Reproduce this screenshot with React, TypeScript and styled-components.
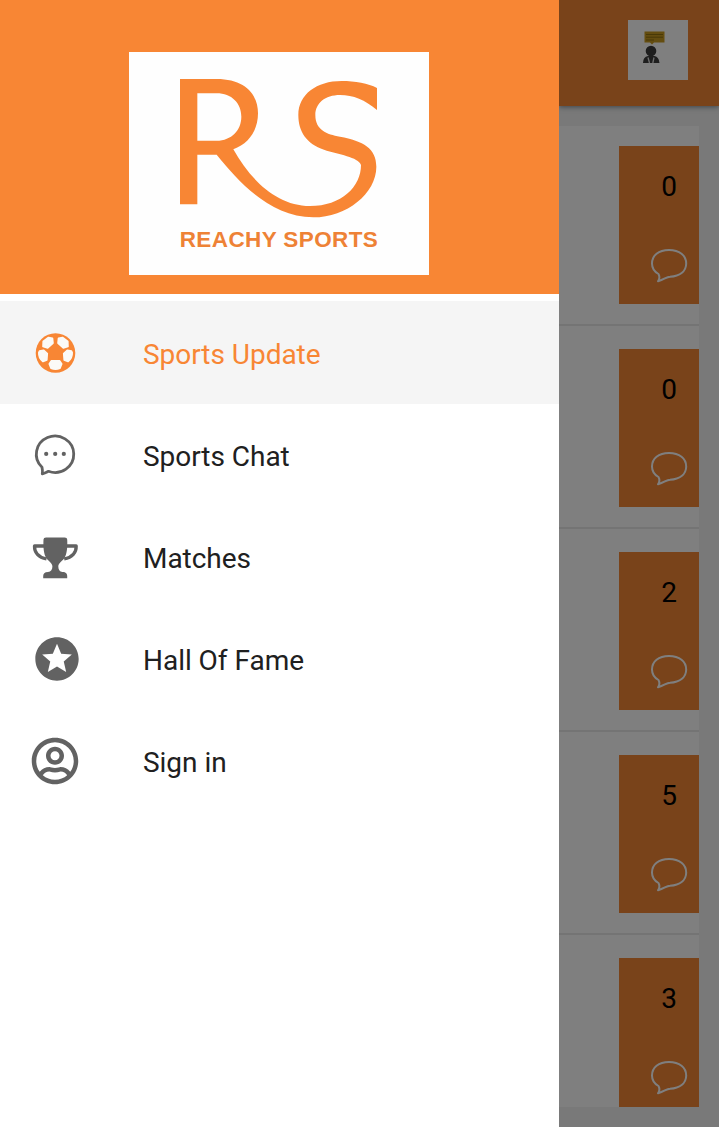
import React from "react";
import styled, { createGlobalStyle } from "styled-components";
import { FaRegUserCircle } from "react-icons/fa";
import { MdStars } from "react-icons/md";

const ORANGE = "#f88634";

const GlobalStyle = createGlobalStyle`
  * { box-sizing: border-box; }
  body { margin: 0; background: #fff; font-family: Roboto, "Liberation Sans", sans-serif; }
`;

const Screen = styled.div`
  display: flex;
  width: 719px;
  height: 1127px;
  overflow: hidden;
`;

const Drawer = styled.aside`
  width: 559px;
  flex: none;
  background: #fff;
`;

const DrawerHeader = styled.header`
  height: 294px;
  padding-top: 52px;
  background: ${ORANGE};
`;

const LogoCard = styled.div`
  display: flex;
  flex-direction: column;
  align-items: center;
  width: 300px;
  height: 223px;
  margin: 0 auto 0 129px;
  background: #fefefe;
`;

const LogoMark = styled.svg`
  display: block;
  width: 300px;
  height: 174px;
  flex: none;
`;

const LogoName = styled.div`
  font: bold 22.5px/27px "Liberation Sans", Arial, sans-serif;
  letter-spacing: 0.4px;
  color: #ee8236;
  white-space: nowrap;
`;

const Menu = styled.nav`
  padding-top: 7px;
`;

const MenuItem = styled.a<{ $active?: boolean }>`
  display: flex;
  align-items: center;
  height: ${(p) => (p.$active ? 103 : 102)}px;
  padding-left: 32px;
  background: ${(p) => (p.$active ? "#f5f5f5" : "transparent")};
  color: ${(p) => (p.$active ? ORANGE : "#202020")};
`;

const IconSlot = styled.span<{ $shift?: number }>`
  display: flex;
  align-items: center;
  width: 48px;
  height: 48px;
  margin-right: 63px;
  color: ${(p) => p.color ?? "#626262"};
  svg { flex: none; margin-left: ${(p) => p.$shift ?? 0}px; }
`;

const MenuLabel = styled.span<{ $active?: boolean }>`
  padding-top: ${(p) => (p.$active ? 5 : 3)}px;
  font-size: 28px;
  line-height: 34px;
  letter-spacing: -0.03px;
`;

const Page = styled.main`
  position: relative;
  width: 160px;
  height: 1127px;
  overflow: hidden;
  background: #f2f2f2;
`;

const Scrim = styled.div`
  position: absolute;
  inset: 0;
  background: rgba(0, 0, 0, 0.5);
`;

const AppBar = styled.header`
  display: flex;
  justify-content: flex-end;
  height: 106px;
  padding: 20px 31px 0 0;
  background: #f28735;
  box-shadow: 0 1px 5px rgba(30, 50, 65, 0.55);
`;

const Avatar = styled.div`
  width: 60px;
  height: 60px;
  background: #fff;
`;

const Feed = styled.section`
  height: 981px;
  margin: 20px 20px 0 0;
  overflow: hidden;
  background: #fefefe;
`;

const FeedRow = styled.article`
  display: flex;
  justify-content: flex-end;
  height: 203px;
  padding-top: 23px;
  border-bottom: 2px solid #e9e9e9;
  &:first-child {
    height: 200px;
    padding-top: 20px;
  }
`;

const CommentTag = styled.div`
  display: flex;
  flex-direction: column;
  align-items: center;
  width: 80px;
  height: 158px;
  padding: 24px 0 0 20px;
  background: #f28735;
`;

const Count = styled.span`
  font-size: 28px;
  line-height: 34px;
  color: #000;
`;

const Bubble = styled.svg`
  width: 40px;
  height: 40px;
  margin-top: 41px;
`;

const BallIcon = () => (
  <svg width="48" height="48" viewBox="0 0 48 48">
    <circle cx="23.5" cy="24" r="19.8" fill="currentColor" />
    <g fill="#fbfaf7" stroke="#fbfaf7" strokeWidth="1.6" strokeLinejoin="round">
      {[
        "M11.2 12.500L16.500 8.500L20.500 9.300L21 14.200L15.700 19L11 17.500Z",
        "M35.800 12.500L30.500 8.500L26.500 9.300L26 14.200L31.300 19L36 17.500Z",
        "M7.500 22L11.500 21.200L15.300 24.500L14.800 31L11 32.500Q6.500 29 6.800 23.500Z",
        "M39.500 22L35.500 21.200L31.700 24.500L32.200 31L36 32.500Q40.500 29 40.200 23.500Z",
        "M19.300 31.800H27.700L29.700 35L28 39.200Q23.500 41 19 39.200L17.300 35Z",
      ].map((d) => (
        <path key={d} d={d} />
      ))}
    </g>
  </svg>
);

const ChatIcon = () => (
  <svg width="48" height="48" viewBox="0 0 48 48">
    <path
      d="M10 36.300A18.700 18.200 0 1 1 16.500 40.300Q13.500 42 10.300 42.800Q10.800 39.500 10 36.300Z"
      fill="none"
      stroke="currentColor"
      strokeWidth="2.8"
      strokeLinejoin="round"
    />
    <g fill="currentColor">
      <circle cx="14.200" cy="22.900" r="2.100" />
      <circle cx="23.200" cy="22.900" r="2.100" />
      <circle cx="31.800" cy="22.900" r="2.100" />
    </g>
  </svg>
);

const TrophyIcon = () => (
  <svg width="48" height="48" viewBox="0 0 48 48">
    <path
      d="M12 13H2.500C2.300 19.500 6.500 24.500 14.500 26M34.700 13H44.200C44.400 19.500 40.200 24.500 32.200 26"
      fill="none"
      stroke="currentColor"
      strokeWidth="3.300"
      strokeLinejoin="round"
    />
    <path
      d="M11.500 6.500Q11.500 4.500 14 4.500H32.700Q35.200 4.500 35.200 6.500C35.600 14 35 21 32.500 25C30 28.500 26.300 30 26.300 33.500C26.300 36.500 27.500 38.700 30.500 38.900C34 39 35.200 40.500 35.200 43V45.200H11.200V43C11.200 40.500 12.500 39 16 38.900C19 38.700 20.400 36.500 20.400 33.500C20.400 30 16.700 28.500 14.200 25C11.700 21 11.100 14 11.500 6.500Z"
      fill="currentColor"
    />
  </svg>
);

const Logo = () => (
  <LogoCard>
    <LogoMark viewBox="27 36 900 522">
      <path
        fill={ORANGE}
        fillRule="evenodd"
        d="M180 117H290C372 117 414 160 414 220C414 272 385 312 340 328C390 418 470 498 570 498C665 498 723 440 723 375C715 350 655 344 612 329C560 312 535 275 535 225C535 163 590 123 665 123C705 123 745 130 771 144V210C735 180 700 165 660 165C615 165 586 190 586 225C586 270 620 283 660 290C730 303 769 325 769 380C769 460 680 532 580 532C450 530 360 430 290 344H232V493H180Z M232 160V302H290C335 302 364 270 364 230C364 190 335 160 290 160Z"
      />
    </LogoMark>
    <LogoName>REACHY SPORTS</LogoName>
  </LogoCard>
);

const counts = [0, 0, 2, 5, 3];

const menu = [
  { label: "Sports Update", icon: <BallIcon />, shift: 0 },
  { label: "Sports Chat", icon: <ChatIcon />, shift: 0 },
  { label: "Matches", icon: <TrophyIcon />, shift: 0 },
  { label: "Hall Of Fame", icon: <MdStars size={52} />, shift: -1 },
  { label: "Sign in", icon: <FaRegUserCircle size={48} />, shift: -1 },
];

export default function App() {
  return (
    <Screen>
      <GlobalStyle />
      <Drawer>
        <DrawerHeader>
          <Logo />
        </DrawerHeader>
        <Menu>
          {menu.map(({ label, icon, shift }, i) => (
            <MenuItem key={label} $active={i === 0}>
              <IconSlot color={i === 0 ? ORANGE : undefined} $shift={shift}>
                {icon}
              </IconSlot>
              <MenuLabel $active={i === 0}>{label}</MenuLabel>
            </MenuItem>
          ))}
        </Menu>
      </Drawer>
      <Page>
        <AppBar>
          <Avatar>
            <svg width="60" height="60" viewBox="0 0 60 60">
              <path d="M16.500 11.500H36.500V22.500H26L24 24.500L22 22.500H16.500Z" fill="#c99a20" />
              <path d="M18 14.500H35M18 17.200H35M18 20H26" stroke="#8a6d10" strokeWidth="0.9" />
              <circle cx="23" cy="31" r="5.300" fill="#3c3c3c" />
              <path d="M15 43Q15 37 20 36H26.500Q31 37 31.500 43Z" fill="#3c3c3c" />
              <path d="M20 37.500L21.500 43M26 37.500L24.800 43" stroke="#ddd" strokeWidth="1.300" />
            </svg>
          </Avatar>
        </AppBar>
        <Feed>
          {counts.map((count, i) => (
            <FeedRow key={i}>
              <CommentTag>
                <Count>{count}</Count>
                <Bubble viewBox="0 0 40 40">
                  <path
                    d="M9.500 29C5 26.500 3 23 3 18.500C3 10.500 9.500 5 20 5C30.500 5 37.200 10.500 37.200 18.500C37.200 26.500 30.500 31 21 31.800C17.500 32 16 34 9 36.300C11 33.500 10.800 31.500 9.500 29Z"
                    fill="none"
                    stroke="#fff"
                    strokeWidth="2"
                    strokeLinejoin="round"
                  />
                </Bubble>
              </CommentTag>
            </FeedRow>
          ))}
        </Feed>
        <Scrim />
      </Page>
    </Screen>
  );
}
